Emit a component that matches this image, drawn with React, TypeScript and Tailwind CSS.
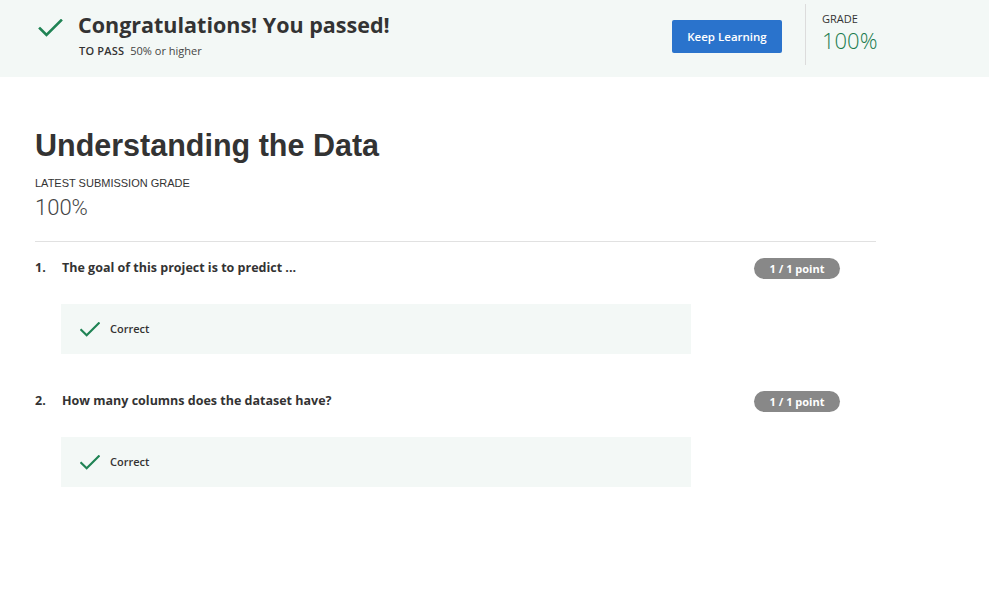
import React from 'react';

const Check: React.FC<{ className?: string }> = ({ className }) => (
  <svg viewBox="0 0 24 18" className={className} fill="none">
    <path d="M1.5 9.5 L8 16 L22.5 1.5" stroke="#1f8354" strokeWidth="2.6" strokeLinecap="square" />
  </svg>
);

const questions = [
  { n: '1.', text: 'The goal of this project is to predict ...' },
  { n: '2.', text: 'How many columns does the dataset have?' },
];

export default function App() {
  return (
    <div className="w-[989px] h-[597px] bg-white text-[#333]" style={{ fontFamily: '"Open Sans", sans-serif' }}>
      {/* Banner */}
      <div className="h-[77px] bg-[#f3f8f6] flex items-start">
        <div className="pl-[38px] pt-[19px]">
          <Check className="w-[25px] h-[18px]" />
        </div>
        <div className="pl-[15px] pt-[9px]">
          <h1 className="text-[21.5px] font-bold leading-[32px] text-[#333]">Congratulations! You passed!</h1>
          <div className="text-[11px] leading-[16px] mt-[2px] ml-[1px]">
            <span className="font-semibold tracking-[0.2px]">TO PASS</span>
            <span className="ml-[6px] text-[#444]">50% or higher</span>
          </div>
        </div>
        <div className="ml-auto pt-[20px]">
          <button className="w-[110px] h-[33px] bg-[#2a73cc] text-white text-[11.5px] font-semibold rounded-[2px]">
            Keep Learning
          </button>
        </div>
        <div className="ml-[23px] mt-[4px] h-[61px] w-px bg-[#dcdcdc]" />
        <div className="pl-[16px] pt-[11px] w-[183px]">
          <div className="text-[11px] leading-[16px] text-[#333]">GRADE</div>
          <div className="text-[22px] leading-[26px] font-light text-[#1b7c4f]">100%</div>
        </div>
      </div>

      {/* Main */}
      <div className="pl-[35px] w-[876px]">
        <h2 className="pt-[48px] text-[30.5px] font-bold leading-[40px] text-[#333]" style={{ fontFamily: '"Liberation Sans", Arial, sans-serif' }}>
          Understanding the Data
        </h2>
        <div className="mt-[11px] text-[11px] leading-[14px] text-[#333]" style={{ fontFamily: '"Liberation Sans", Arial, sans-serif' }}>
          LATEST SUBMISSION GRADE
        </div>
        <div className="mt-[4px] text-[22px] leading-[28px] font-light text-[#444]" style={{ fontFamily: 'Roboto, sans-serif' }}>
          100%
        </div>
        <div className="mt-[19px] h-px bg-[#e1e1e1]" />

        {questions.map((q, i) => (
          <div key={i} className={i === 0 ? 'pt-[16px]' : 'pt-[37px]'}>
            <div className="flex items-start">
              <div className="w-[27px] text-[12.5px] font-bold leading-[20px]">{q.n}</div>
              <div className="flex-1 text-[12.5px] font-bold leading-[20px]">{q.text}</div>
              <div className="mr-[36px] w-[86px] h-[21px] rounded-full bg-[#888] text-white text-[11px] font-bold leading-[21px] text-center">
                1 / 1 point
              </div>
            </div>
            <div className="ml-[26px] mt-[25px] w-[630px] h-[50px] bg-[#f3f8f6] flex items-center pl-[19px]">
              <Check className="w-[20px] h-[15px]" />
              <span className="ml-[10px] text-[11px] font-semibold text-[#333]">Correct</span>
            </div>
          </div>
        ))}
      </div>
    </div>
  );
}
